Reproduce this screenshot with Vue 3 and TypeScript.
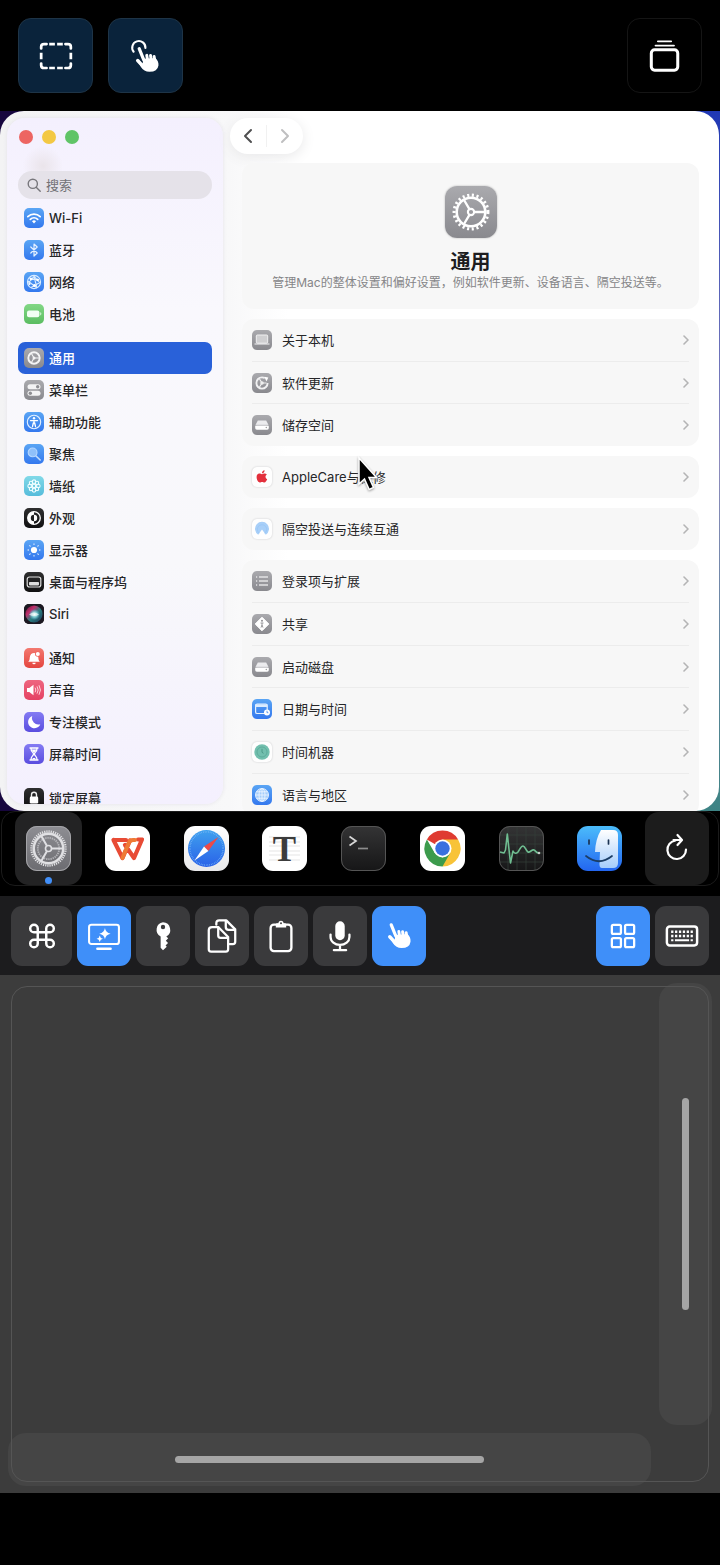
<script setup lang="ts">
import { ref } from 'vue'

interface Item {
  id: string
  label: string
  tone: string
}

const sidebar: Item[][] = [
  [
    { id: 'wifi', label: 'Wi-Fi', tone: 'blue' },
    { id: 'bluetooth', label: '蓝牙', tone: 'blue' },
    { id: 'network', label: '网络', tone: 'blue' },
    { id: 'battery', label: '电池', tone: 'green' },
  ],
  [
    { id: 'gear', label: '通用', tone: 'gray' },
    { id: 'menubar', label: '菜单栏', tone: 'gray' },
    { id: 'access', label: '辅助功能', tone: 'blue' },
    { id: 'spotlight', label: '聚焦', tone: 'blue' },
    { id: 'wallpaper', label: '墙纸', tone: 'cyan' },
    { id: 'appearance', label: '外观', tone: 'black' },
    { id: 'display', label: '显示器', tone: 'blue' },
    { id: 'desktop', label: '桌面与程序坞', tone: 'black' },
    { id: 'siri', label: 'Siri', tone: 'black' },
  ],
  [
    { id: 'bell', label: '通知', tone: 'red' },
    { id: 'sound', label: '声音', tone: 'pink' },
    { id: 'moon', label: '专注模式', tone: 'indigo' },
    { id: 'hourglass', label: '屏幕时间', tone: 'indigo' },
  ],
  [{ id: 'lock', label: '锁定屏幕', tone: 'black' }],
]

const groups: { size: string; items: Item[] }[] = [
  {
    size: 'three',
    items: [
      { id: 'laptop', label: '关于本机', tone: 'gray' },
      { id: 'update', label: '软件更新', tone: 'gray' },
      { id: 'disk', label: '储存空间', tone: 'gray' },
    ],
  },
  { size: 'one', items: [{ id: 'apple', label: 'AppleCare与保修', tone: 'white' }] },
  { size: 'one', items: [{ id: 'airdrop', label: '隔空投送与连续互通', tone: 'white' }] },
  {
    size: 'six',
    items: [
      { id: 'list', label: '登录项与扩展', tone: 'gray' },
      { id: 'share', label: '共享', tone: 'gray' },
      { id: 'disk', label: '启动磁盘', tone: 'gray' },
      { id: 'calendar', label: '日期与时间', tone: 'blue' },
      { id: 'timemachine', label: '时间机器', tone: 'white' },
      { id: 'globe', label: '语言与地区', tone: 'blue' },
    ],
  },
]

const dock = [
  { id: 'settings', label: '系统设置' },
  { id: 'wps', label: 'WPS Office' },
  { id: 'safari', label: 'Safari' },
  { id: 'typora', label: 'Typora' },
  { id: 'terminal', label: '终端' },
  { id: 'chrome', label: 'Chrome' },
  { id: 'activity', label: '活动监视器' },
  { id: 'finder', label: '访达' },
]

const tools = [
  { id: 'command', label: 'Command', on: false },
  { id: 'screen', label: '屏幕', on: true },
  { id: 'key', label: '密码', on: false },
  { id: 'copy', label: '拷贝', on: false },
  { id: 'paste', label: '粘贴', on: false },
  { id: 'mic', label: '麦克风', on: false },
  { id: 'hand', label: '触控', on: true },
]
const rightTools = [
  { id: 'grid', label: '面板', on: true },
  { id: 'keyboard', label: '键盘', on: false },
]

const active = ref('gear')
const activeApp = ref('settings')
const query = ref('')
</script>

<template>
  <div class="app" lang="zh-CN">
    <svg class="sprite" aria-hidden="true">
      <defs>
        <linearGradient id="g-safari" x1="0" y1="0" x2="0" y2="1">
          <stop offset="0" stop-color="#3fa0ee" /><stop offset="1" stop-color="#2a62e8" />
        </linearGradient>
        <linearGradient id="g-finder" x1="0" y1="0" x2="0" y2="1">
          <stop offset="0" stop-color="#4bbcfb" /><stop offset="1" stop-color="#2366f0" />
        </linearGradient>
        <linearGradient id="g-face" x1="0" y1="0" x2="0" y2="1">
          <stop offset="0" stop-color="#ffffff" /><stop offset="1" stop-color="#a5cdfb" />
        </linearGradient>
        <linearGradient id="g-gray" x1="0" y1="0" x2="0" y2="1">
          <stop offset="0" stop-color="#8e8e93" /><stop offset="1" stop-color="#6c6c71" />
        </linearGradient>
        <linearGradient id="g-dark" x1="0" y1="0" x2="0" y2="1">
          <stop offset="0" stop-color="#343435" /><stop offset="1" stop-color="#161617" />
        </linearGradient>
        <linearGradient id="g-light" x1="0" y1="0" x2="0" y2="1">
          <stop offset="0" stop-color="#ffffff" /><stop offset="1" stop-color="#e9e9eb" />
        </linearGradient>
        <radialGradient id="g-siri" cx="0.5" cy="0.5" r="0.5">
          <stop offset="0" stop-color="#f4ffff" /><stop offset="0.5" stop-color="#8edbe0" stop-opacity="0.8" /><stop offset="1" stop-color="#5fb8e0" stop-opacity="0" />
        </radialGradient>
        <linearGradient id="g-siribg" x1="0" y1="0" x2="1" y2="1">
          <stop offset="0" stop-color="#4a1530" /><stop offset="0.3" stop-color="#c22d6c" /><stop offset="0.55" stop-color="#2a7f80" /><stop offset="1" stop-color="#1c3458" />
        </linearGradient>

        <symbol id="s-wifi" viewBox="0 0 20 20">
          <g fill="none" stroke="#fff" stroke-width="1.7" stroke-linecap="round">
            <path d="M3.8 8.6a9 9 0 0 1 12.4 0" /><path d="M6.3 11.3a5.4 5.4 0 0 1 7.4 0" />
          </g>
          <path d="M8 13.2a2.9 2.9 0 0 1 4 0L10 15.4z" fill="#fff" />
        </symbol>
        <symbol id="s-bluetooth" viewBox="0 0 20 20">
          <path d="M6.8 7l6.4 6L10 16V4l3.2 3-6.4 6" fill="none" stroke="#e4f0ff" stroke-width="1.2" stroke-linejoin="round" stroke-linecap="round" />
        </symbol>
        <symbol id="s-network" viewBox="0 0 20 20">
          <g fill="none" stroke="#d8ebff" stroke-width="1.1">
            <circle cx="10" cy="10" r="6.6" /><path d="M5 6l10 1.5M4 11.5l6-7 3 11.5M7 15.5l9-5M4 9l9 7M10 4l6 7" />
          </g>
          <g fill="#fff"><circle cx="7" cy="7" r="1.3" /><circle cx="13.5" cy="8" r="1.3" /><circle cx="10.5" cy="13.5" r="1.4" /><circle cx="5.5" cy="12" r="1" /></g>
        </symbol>
        <symbol id="s-battery" viewBox="0 0 20 20">
          <rect x="3" y="6.6" width="12.4" height="6.6" rx="2" fill="#f2fff3" /><path d="M16.2 8.3c1.6.4 1.6 2.8 0 3.2z" fill="#d8f7dc" />
        </symbol>
        <symbol id="s-gear" viewBox="0 0 20 20">
          <g fill="none" stroke="#fff">
            <circle cx="10" cy="10" r="6.5" stroke-width="1.2" pathLength="44" stroke-dasharray="0.9 1.1" />
            <circle cx="10" cy="10" r="5.5" stroke-width="1" />
            <circle cx="10" cy="10" r="1.2" stroke-width="0.8" />
            <path d="M11.3 10h4.100M9.400 8.900L7.200 5.200M9.400 11.100l-2.200 3.700" stroke-width="0.900" />
          </g>
        </symbol>
        <symbol id="s-gear-small" viewBox="0 0 20 20">
          <g fill="none" stroke="#f4f4f5">
            <circle cx="10" cy="10" r="5.700" stroke-width="1.900" /><circle cx="10" cy="10" r="1.500" fill="#f4f4f5" stroke="none" />
            <path d="M10 10h5.500M10 10L7.300 5.300M10 10l-2.700 4.700" stroke-width="1.100" />
          </g>
        </symbol>
        <symbol id="s-menubar" viewBox="0 0 20 20">
          <rect x="3.500" y="4.300" width="13" height="5" rx="2.500" fill="#f3f3f4" /><rect x="3.500" y="10.800" width="13" height="5" rx="2.500" fill="#f3f3f4" />
          <circle cx="13.700" cy="6.800" r="1.700" fill="#8e8e92" /><circle cx="6.300" cy="13.300" r="1.700" fill="#8e8e92" />
        </symbol>
        <symbol id="s-access" viewBox="0 0 20 20">
          <circle cx="10" cy="10" r="6.700" fill="none" stroke="#e2f0ff" stroke-width="1.100" />
          <circle cx="10" cy="6.300" r="1.200" fill="#fff" />
          <path d="M6.500 8.600h7M10 8.600v3M9.300 11l-.8 3.500M10.700 11l.8 3.500" stroke="#fff" stroke-width="1.300" fill="none" stroke-linecap="round" />
        </symbol>
        <symbol id="s-spotlight" viewBox="0 0 20 20">
          <circle cx="8.600" cy="8.400" r="4.400" fill="#8fc0fa" stroke="#b5d7ff" stroke-width="1.100" /><path d="M12 12l4.200 4" stroke="#c4defd" stroke-width="1.600" stroke-linecap="round" />
        </symbol>
        <symbol id="s-wallpaper" viewBox="0 0 20 20">
          <g fill="none" stroke="#f0feff" stroke-width="1.100">
            <circle cx="10" cy="10" r="1.700" /><circle cx="10" cy="5.700" r="1.800" /><circle cx="10" cy="14.300" r="1.800" /><circle cx="5.700" cy="10" r="1.800" /><circle cx="14.300" cy="10" r="1.800" />
            <circle cx="7" cy="7" r="1.700" /><circle cx="13" cy="7" r="1.700" /><circle cx="7" cy="13" r="1.700" /><circle cx="13" cy="13" r="1.700" />
          </g>
        </symbol>
        <symbol id="s-appearance" viewBox="0 0 20 20">
          <circle cx="10" cy="10" r="6.300" fill="none" stroke="#fff" stroke-width="1.300" /><path d="M10 3.700a6.300 6.300 0 0 0 0 12.600v-3.100a3.200 3.200 0 0 1 0-6.400z" fill="#fff" /><path d="M10 6.800a3.200 3.200 0 0 1 0 6.400z" fill="#fff" />
        </symbol>
        <symbol id="s-display" viewBox="0 0 20 20">
          <circle cx="10" cy="10" r="3.100" fill="#fff" /><circle cx="10" cy="10" r="5.700" fill="none" stroke="#fff" stroke-width="1.500" pathLength="80" stroke-dasharray="2.200 7.800" stroke-dashoffset="1.100" />
        </symbol>
        <symbol id="s-desktop" viewBox="0 0 20 20">
          <rect x="3.200" y="5" width="13.600" height="10" rx="2.200" fill="none" stroke="#ddd" stroke-width="1.200" /><rect x="5" y="10" width="10" height="3.400" rx="0.800" fill="#ddd" />
        </symbol>
        <symbol id="s-siri" viewBox="0 0 20 20">
          <rect x="0" y="0" width="20" height="20" fill="#1c1822" /><circle cx="10" cy="10" r="8.600" fill="url(#g-siribg)" /><circle cx="10.500" cy="10.500" r="5.600" fill="url(#g-siri)" />
          <path d="M5 10.500q5-4 10 0q-5 3-10 0z" fill="#fff" opacity="0.600" />
        </symbol>
        <symbol id="s-bell" viewBox="0 0 20 20">
          <path d="M4.200 13.800c1.600-1.500 1.300-2.300 1.600-4.600.3-2.600 2-4.200 4.200-4.200s4 1.600 4.300 4.200c.3 2.300.1 3.100 1.500 4.600zM8.300 14.800h3.400a1.700 1.500 0 0 1-3.400 0z" fill="#fff" /><circle cx="13.800" cy="6" r="2.800" fill="#f0675e" /><circle cx="13.800" cy="6" r="2" fill="#fff" />
        </symbol>
        <symbol id="s-sound" viewBox="0 0 20 20">
          <path d="M3 8h2.300L9.500 4.800v10.400L5.300 12H3z" fill="#fff" /><path d="M11.300 8q1.300 2 0 4M13.200 6.700q2.100 3.300 0 6.600M15.200 5.600q2.700 4.400 0 8.800" fill="none" stroke="#ffd4dc" stroke-width="1" stroke-linecap="round" />
        </symbol>
        <symbol id="s-moon" viewBox="0 0 20 20"><path d="M8.300 4a6.300 6.300 0 1 0 8 8.200A6.400 6.400 0 0 1 8.300 4z" fill="#fff" /></symbol>
        <symbol id="s-hourglass" viewBox="0 0 20 20">
          <path d="M6 4h8M6 16h8M7 4.500c0 3.500 2.500 3.500 2.500 5.500S7 12 7 15.500M13 4.500c0 3.500-2.500 3.500-2.500 5.500s2.500 2 2.500 5.500" fill="none" stroke="#fff" stroke-width="1.300" stroke-linecap="round" /><path d="M7.500 5.500h5L10 9zM8 15.500c.3-2 3.700-2 4 0z" fill="#fff" />
        </symbol>
        <symbol id="s-lock" viewBox="0 0 20 20"><path d="M7.500 9V6.800a2.500 2.500 0 0 1 5 0V9" fill="none" stroke="#eee" stroke-width="1.400" /><rect x="5.800" y="8.600" width="8.400" height="7" rx="1.300" fill="#fff" /></symbol>
        <symbol id="s-laptop" viewBox="0 0 20 20">
          <rect x="4.300" y="5" width="11.400" height="8.200" rx="1" fill="#cfcfd1" stroke="#efeff0" stroke-width="1" /><path d="M2.500 13.500h15v1h-15z" fill="#f4f4f5" />
        </symbol>
        <symbol id="s-update" viewBox="0 0 20 20">
          <circle cx="10" cy="10" r="5.600" fill="none" stroke="#f1f1f2" stroke-width="1.900" pathLength="60" stroke-dasharray="50 10" />
          <path d="M10 10h4.500M10 10L7.500 6M10 10l-2.500 4" stroke="#eee" stroke-width="1.200" /><circle cx="10" cy="10" r="1.800" fill="#eee" /><path d="M12.300 3.700l4 .8-1.800 4z" fill="#fff" />
        </symbol>
        <symbol id="s-disk" viewBox="0 0 20 20">
          <path d="M5.800 5.400h8.400l2.300 4.500H3.500z" fill="#ececee" /><rect x="3.200" y="10" width="13.600" height="4.700" rx="1.600" fill="#fff" /><path d="M3.800 10.300h12.400" stroke="#a6a6aa" stroke-width="0.700" /><circle cx="14.300" cy="12.500" r="0.700" fill="#999" />
        </symbol>
        <symbol id="s-apple" viewBox="0 0 20 20">
          <path d="M10 7.200c-.9 0-1.600-.6-2.600-.6C5.700 6.600 4.600 8 4.600 10c0 2.700 1.700 5.400 3.200 5.400.8 0 1.300-.5 2.300-.5s1.400.5 2.200.5c1.300 0 2.400-1.800 2.900-3.200-2.200-1-2.100-3.700-.3-4.600-.6-.7-1.400-1-2.200-1-1.100 0-1.800.6-2.700.6z" fill="#e3303c" /><path d="M9.900 6.400c0-1.700 1.100-2.900 2.700-3.100 0 1.700-1.100 3-2.700 3.100z" fill="#e3303c" />
        </symbol>
        <symbol id="s-airdrop" viewBox="0 0 20 20">
          <path d="M6.200 15.700a7 7 0 1 1 7.600 0L10 10.500z" fill="#a8cff8" /><path d="M7.200 14.200a4.700 4.700 0 1 1 5.600 0" fill="none" stroke="#97c5f6" stroke-width="0.700" />
        </symbol>
        <symbol id="s-list" viewBox="0 0 20 20"><path d="M7 6h9M7 10h9M7 14h9M4 6h1.200M4 10h1.200M4 14h1.200" stroke="#e2e2e4" stroke-width="1.300" /></symbol>
        <symbol id="s-share" viewBox="0 0 20 20">
          <path d="M10 3.200L16.800 10 10 16.800 3.200 10z" fill="#fff" stroke="#fff" stroke-width="1" stroke-linejoin="round" /><circle cx="10" cy="6.800" r="1" fill="#8f8f93" /><path d="M8.500 9h3M10 9v2.200M10 11l-1 2.600M10 11l1 2.600" stroke="#8f8f93" stroke-width="0.900" />
        </symbol>
        <symbol id="s-calendar" viewBox="0 0 20 20">
          <rect x="3.600" y="5" width="11.600" height="9.500" rx="1.600" fill="none" stroke="#e6f2ff" stroke-width="1.200" /><path d="M3.400 5.200h12v2.800h-12z" fill="#dbecff" /><circle cx="15" cy="13.500" r="3" fill="#fff" /><path d="M15 11.800v1.900h1.300" fill="none" stroke="#3d86ee" stroke-width="0.800" />
        </symbol>
        <symbol id="s-timemachine" viewBox="0 0 20 20">
          <circle cx="10" cy="10" r="7.700" fill="#72bfae" /><circle cx="10" cy="10" r="5" fill="none" stroke="#5dac9a" stroke-width="1" /><path d="M10 6.800v3.500l1.500 1" fill="none" stroke="#4c9a88" stroke-width="1" />
        </symbol>
        <symbol id="s-globe" viewBox="0 0 20 20">
          <circle cx="10" cy="10" r="6.500" fill="#a4cdfb" /><g fill="none" stroke="#eaf4ff" stroke-width="0.900"><circle cx="10" cy="10" r="6.500" /><ellipse cx="10" cy="10" rx="3" ry="6.500" /><path d="M3.500 10h13M4.500 6.800h11M4.500 13.200h11M10 3.500v13" /></g>
        </symbol>

        <symbol id="d-settings" viewBox="0 0 45 45">
          <rect width="45" height="45" rx="11" fill="url(#g-gray)" /><rect x="0.500" y="0.500" width="44" height="44" rx="10.500" fill="none" stroke="#a4a4a8" />
          <g fill="none" stroke="#e0e0e3">
            <circle cx="22.500" cy="22.500" r="17" stroke-width="2.400" pathLength="96" stroke-dasharray="1.100 0.900" />
            <circle cx="22.500" cy="22.500" r="14.700" stroke-width="2.400" />
            <circle cx="22.500" cy="22.500" r="10.700" stroke-width="1.800" stroke="#b5b5b9" pathLength="60" stroke-dasharray="1.200 0.800" />
            <circle cx="22.500" cy="22.500" r="3" stroke-width="1.600" />
            <path d="M25.500 22.500h12M21 20L15 9.500M21 25l-6 10.500" stroke-width="2" />
          </g>
        </symbol>
        <symbol id="d-wps" viewBox="0 0 45 45">
          <rect width="45" height="45" rx="11" fill="#fff" />
          <path d="M8.500 14h12.500M8.500 14l9 18 7.500-17.500M20 19l9 13 8-18.500h-4" fill="none" stroke="#e84b35" stroke-width="4.200" stroke-linejoin="round" stroke-linecap="round" />
          <path d="M17.500 32l6.200-15q1.200-3 4.300-3h2" fill="none" stroke="#ef7a35" stroke-width="4" stroke-linecap="round" />
        </symbol>
        <symbol id="d-safari" viewBox="0 0 45 45">
          <rect width="45" height="45" rx="11" fill="url(#g-light)" /><circle cx="22.500" cy="22.500" r="18.500" fill="url(#g-safari)" />
          <circle cx="22.500" cy="22.500" r="16.600" fill="none" stroke="#7fbcf8" stroke-width="1.400" pathLength="120" stroke-dasharray="0.700 1.300" />
          <path d="M34.500 11L24.400 25 20 20.500z" fill="#ee4a48" /><path d="M10.500 34.500L20 20.500l4.400 4.500z" fill="#fff" />
        </symbol>
        <symbol id="d-typora" viewBox="0 0 45 45">
          <rect width="45" height="45" rx="11" fill="#fff" /><path d="M7 11h31M7 16h31M7 20h31M7 25h31M7 29h31M7 34h31" stroke="#e5e5e5" />
          <text x="22.500" y="35" text-anchor="middle" class="serif-glyph">T</text>
        </symbol>
        <symbol id="d-terminal" viewBox="0 0 45 45">
          <rect width="45" height="45" rx="11" fill="url(#g-dark)" /><rect x="0.500" y="0.500" width="44" height="44" rx="10.500" fill="none" stroke="#555" />
          <path d="M8.500 10.500l6.500 4.500-6.500 4.500" fill="none" stroke="#d8d8d8" stroke-width="1.700" /><path d="M17 22.500h10" stroke="#8c8c8c" stroke-width="1.700" />
        </symbol>
        <symbol id="d-chrome" viewBox="0 0 45 45">
          <rect width="45" height="45" rx="11" fill="#fff" />
          <path d="M22.500 22.500L6.900 13.500a18 18 0 0 1 31.200 0z" fill="#df3b31" /><path d="M22.500 13.500h15.600a18 18 0 0 1-15.600 27z" fill="#f8c338" /><path d="M6.900 13.500l7.800 13.500 7.800 4.500 7.700-4.500-7.700 13.500A18 18 0 0 1 6.900 13.500z" fill="#3c9b4c" />
          <circle cx="22.500" cy="22.500" r="9" fill="#fff" /><circle cx="22.500" cy="22.500" r="7.200" fill="#3970df" />
        </symbol>
        <symbol id="d-activity" viewBox="0 0 45 45">
          <rect width="45" height="45" rx="11" fill="url(#g-dark)" /><path d="M9 1v43M18 1v43M27 1v43M36 1v43M1 9h43M1 18h43M1 27h43M1 36h43" stroke="#334139" stroke-width="0.700" /><rect x="0.500" y="0.500" width="44" height="44" rx="10.500" fill="none" stroke="#555" />
          <path d="M1 26l4 1 1.500-3L8.300 8l3.200 29 2.500-12q2 4 5 1c2-3 3-6 5-6s3 5 5 6 4-3 6-2 2 3 5 3" fill="none" stroke="#6fbd91" stroke-width="1.600" stroke-linejoin="round" /><circle cx="40" cy="27" r="1.300" fill="#c4cbc7" />
        </symbol>
        <symbol id="d-finder" viewBox="0 0 45 45">
          <rect width="45" height="45" rx="11" fill="url(#g-finder)" /><path d="M24 4h12q5 0 5 5v28q0 5-5 5H25q-3 0-2.500-5l.500-11h-5q.500-13 6-22z" fill="url(#g-face)" />
          <path d="M12 14v4M31.500 14v4" stroke="#1b3353" stroke-width="1.700" stroke-linecap="round" /><path d="M9 30q13 10.500 26 0" fill="none" stroke="#1b3d65" stroke-width="1.700" stroke-linecap="round" />
        </symbol>

        <symbol id="t-command" viewBox="0 0 36 36"><path d="M14 14H9.500a4 4 0 1 1 4-4v16a4 4 0 1 1-4-4h17a4 4 0 1 1-4 4V10a4 4 0 1 1 4 4z" fill="none" stroke="#fff" stroke-width="2.600" /></symbol>
        <symbol id="t-screen" viewBox="0 0 36 36">
          <rect x="2.200" y="6" width="31.600" height="20.500" rx="2.500" fill="none" stroke="#fff" stroke-width="2.200" /><path d="M11 31.500h14" stroke="#fff" stroke-width="2.600" stroke-linecap="round" />
          <path d="M19 9.500q.8 5.200 6 6-5.200.8-6 6-.8-5.200-6-6 5.200-.8 6-6zM13.500 17.500q.4 3 3.400 3.400-3 .4-3.400 3.400-.4-3-3.400-3.400 3-.4 3.400-3.400z" fill="#fff" />
        </symbol>
        <symbol id="t-key" viewBox="0 0 36 36"><path fill-rule="evenodd" d="M18 3.500a8 8 0 0 1 3.500 15l2 2-2.500 2.500 2.300 2.500-2.600 2.500 1.300 1.500-4 3.500-2.500-2.500V18.500A8 8 0 0 1 18 3.500zM18 6.200a2.300 2.300 0 1 0 0 4.600 2.300 2.300 0 0 0 0-4.600z" fill="#fff" /></symbol>
        <symbol id="t-copy" viewBox="0 0 36 36">
          <g fill="none" stroke="#fff" stroke-width="2.400" stroke-linejoin="round" stroke-linecap="round">
            <path d="M12 6V4.500Q12 1.500 15 1.500h7.500L32 11v13q0 2.500-2.500 2.500H26" /><path d="M22 2v6.500q0 3 3 3h6.500" />
            <path d="M7.500 8.500h6.500l10.500 10.500V32q0 2.500-2.500 2.500H6.500Q4 34.500 4 32V12q0-3.500 3.500-3.500z" /><path d="M14 9v8.500q0 2.500 2.500 2.500h7.500" />
          </g>
        </symbol>
        <symbol id="t-paste" viewBox="0 0 36 36"><rect x="7" y="6" width="22" height="28" rx="3.500" fill="none" stroke="#fff" stroke-width="2.500" /><path d="M12.500 9V6q0-1.500 1.500-1.500h1.300a2.700 2.700 0 0 1 5.400 0H22q1.500 0 1.500 1.500v3z" fill="#fff" /><circle cx="18" cy="4.500" r="1" fill="#3a3a3c" /></symbol>
        <symbol id="t-mic" viewBox="0 0 36 36"><rect x="13" y="2.500" width="10" height="20" rx="5" fill="#fff" /><path d="M8 16.500v2.500a10 8.500 0 0 0 20 0v-2.500M18 28v4.500M11.500 33h13" fill="none" stroke="#fff" stroke-width="2.400" stroke-linecap="round" /></symbol>
        <g id="hand-shape">
          <g fill="none" stroke="#fff" stroke-linecap="round">
            <path d="M9.800 6.200L14.600 18" stroke-width="3.400" /><path d="M17.800 13.300l1.200 7M21.800 13.500l1 7M25.600 14.600l1 6" stroke-width="3.100" /><path d="M8.200 18.800L14 25" stroke-width="3.600" />
          </g>
          <path d="M14 17l13-1q3.600 3.500 3.200 8-1 6.700-9.500 6.700-6 0-9-5l-2.500-4.200 4.300.500z" fill="#fff" />
        </g>
        <symbol id="t-hand" viewBox="0 0 36 36"><use href="#hand-shape" /></symbol>
        <symbol id="t-grid" viewBox="0 0 36 36"><g fill="none" stroke="#fff" stroke-width="2.400"><rect x="6.200" y="6.200" width="9.600" height="9.600" rx="1.500" /><rect x="20.200" y="6.200" width="9.600" height="9.600" rx="1.500" /><rect x="6.200" y="20.200" width="9.600" height="9.600" rx="1.500" /><rect x="20.200" y="20.200" width="9.600" height="9.600" rx="1.500" /></g></symbol>
        <symbol id="t-keyboard" viewBox="0 0 36 36"><rect x="2" y="8" width="32" height="20" rx="3" fill="none" stroke="#fff" stroke-width="2.600" /><path d="M6.500 13.500h23M6.500 18h23" stroke="#fff" stroke-width="2.400" stroke-dasharray="2.400 1.720" /><path d="M6.500 22.500h2.400M10.500 22.500h15M27.100 22.500h2.400" stroke="#fff" stroke-width="2.200" /></symbol>
        <symbol id="t-refresh" viewBox="0 0 36 36"><path d="M16.500 9.500A9.300 9.300 0 1 0 27 18.500M14.500 9h8M18.500 4l4.500 5-4.500 5" fill="none" stroke="#fff" stroke-width="2.200" stroke-linecap="round" stroke-linejoin="round" /></symbol>
        <symbol id="t-select" viewBox="0 0 36 36">
          <g fill="none" stroke="#fff" stroke-width="2.900"><path d="M2.300 10V8.300Q2.300 5.300 5.300 5.300H8M28 5.300h2.700q3 0 3 3V10M33.700 26v1.700q0 3-3 3H28M8 30.700H5.300q-3 0-3-3V26" stroke-linecap="round" /><path d="M10.800 5.300h6M19.200 5.300h6M10.800 30.700h6M19.200 30.700h6M2.300 14.500v7M33.700 14.500v7" /></g>
        </symbol>
        <symbol id="t-tap" viewBox="0 0 36 36">
          <path d="M4.900 13.500A7 7 0 1 1 17.400 9.500" fill="none" stroke="#fff" stroke-width="2.200" stroke-linecap="round" />
          <use href="#hand-shape" x="1" y="4" />
        </symbol>
        <symbol id="t-stack" viewBox="0 0 36 36"><path d="M10.500 2.500h14M8 7h19.500" stroke="#fff" stroke-width="2" stroke-linecap="round" /><rect x="3.500" y="11.500" width="28" height="21.500" rx="3.500" fill="none" stroke="#fff" stroke-width="3.200" /></symbol>
      </defs>
    </svg>

    <header class="topbar">
      <button class="square tinted" aria-label="框选"><svg class="glyph"><use href="#t-select" /></svg></button>
      <button class="square tinted" aria-label="点按"><svg class="glyph"><use href="#t-tap" /></svg></button>
      <button class="square plain" aria-label="窗口"><svg class="glyph"><use href="#t-stack" /></svg></button>
    </header>

    <section class="desktop">
      <div class="window">
        <aside class="sidebar">
          <div class="lights">
            <button class="light close" aria-label="关闭"></button>
            <button class="light mini" aria-label="最小化"></button>
            <button class="light zoom" aria-label="缩放"></button>
          </div>
          <label class="search">
            <svg viewBox="0 0 14 14"><circle cx="5.800" cy="5.800" r="4.600" /><path d="M9.200 9.200l4 4" /></svg>
            <input v-model="query" type="text" placeholder="搜索" aria-label="搜索" />
          </label>
          <nav class="nav">
            <ul v-for="(group, g) in sidebar" :key="g">
              <li v-for="item in group" :key="item.id">
                <button class="nav-row" :class="{ selected: active === item.id }" @click="active = item.id">
                  <span class="tile" :class="item.tone"><svg><use :href="item.id === 'gear' ? '#s-gear-small' : '#s-' + item.id" /></svg></span>
                  {{ item.label }}
                </button>
              </li>
            </ul>
          </nav>
        </aside>

        <main class="main">
          <div class="history">
            <button aria-label="后退"><svg viewBox="0 0 10 16"><path d="M8 2L2 8l6 6" /></svg></button>
            <button class="dim" aria-label="前进"><svg viewBox="0 0 10 16"><path d="M2 2l6 6-6 6" /></svg></button>
          </div>
          <section class="hero">
            <span class="tile big gray"><svg><use href="#s-gear" /></svg></span>
            <h1>通用</h1>
            <p>管理Mac的整体设置和偏好设置，例如软件更新、设备语言、隔空投送等。</p>
          </section>
          <ul v-for="(group, g) in groups" :key="g" class="card" :class="group.size">
            <li v-for="item in group.items" :key="item.label">
              <button class="card-row">
                <span class="tile" :class="item.tone"><svg><use :href="'#s-' + item.id" /></svg></span>
                <span class="card-label">{{ item.label }}</span>
                <svg class="chevron" viewBox="0 0 6 10"><path d="M1 1l4 4-4 4" /></svg>
              </button>
            </li>
          </ul>
        </main>
      </div>
      <svg class="pointer" viewBox="0 0 20 36" aria-hidden="true"><path d="M2 2v26l5.500-5 4.700 10.500 4.300-2-4.500-10h7.500z" /></svg>
    </section>

    <nav class="dock">
      <button v-for="app in dock" :key="app.id" class="dock-item" :class="{ current: activeApp === app.id }" :aria-label="app.label" @click="activeApp = app.id">
        <svg><use :href="'#d-' + app.id" /></svg>
      </button>
      <button class="dock-item refresh" aria-label="刷新"><svg><use href="#t-refresh" /></svg></button>
    </nav>

    <div class="toolbar">
      <button v-for="tool in tools" :key="tool.id" class="tool" :class="[tool.id, { on: tool.on }]" :aria-label="tool.label"><svg><use :href="'#t-' + tool.id" /></svg></button>
      <span class="spacer"></span>
      <button v-for="tool in rightTools" :key="tool.id" class="tool" :class="[tool.id, { on: tool.on }]" :aria-label="tool.label"><svg><use :href="'#t-' + tool.id" /></svg></button>
    </div>

    <section class="pad" aria-label="触控板">
      <div class="strip vertical"><span></span></div>
      <div class="strip horizontal"><span></span></div>
      <div class="outline"></div>
    </section>
  </div>
</template>

<style>
body {
  background: #000;
}
</style>

<style scoped>
.app {
  display: flex;
  flex-direction: column;
  min-height: 100vh;
  box-sizing: border-box;
  padding-bottom: 72px;
  background: #000;
  color: #262628;
  font-family: Inter, "Noto Sans CJK SC", sans-serif;
  font-size: 13px;
  line-height: 20px;
}
.app * {
  box-sizing: border-box;
}
.sprite {
  position: absolute;
  width: 0;
  height: 0;
}
button {
  border: 0;
  padding: 0;
  margin: 0;
  background: none;
  color: inherit;
  font: inherit;
  cursor: pointer;
}
svg {
  display: block;
}
ul {
  list-style: none;
  margin: 0;
  padding: 0;
}
.serif-glyph {
  font: bold 35px "Liberation Serif", serif;
  fill: #3c3c3c;
}

.topbar {
  display: flex;
  gap: 15px;
  padding: 18px;
}
.square {
  display: grid;
  place-items: center;
  width: 75px;
  height: 75px;
  border: 1px solid #1e3447;
  border-radius: 13px;
}
.square.tinted {
  background: #0a233b;
}
.square.plain {
  margin-left: auto;
  border-color: #151515;
}
.glyph {
  width: 34px;
  height: 34px;
}

.desktop {
  position: relative;
  flex: none;
  min-height: 0;
  aspect-ratio: 36 / 35;
  background: linear-gradient(to right, #17063e 50%, transparent 50%), linear-gradient(#2038b4, #8d8bbd 50%, #3d8384);
}
.window {
  display: flex;
  height: 100%;
  margin-right: 1px;
  padding: 7px 0 7px 7px;
  border-radius: 24px;
  background: linear-gradient(90deg, #f3f3f4, #f8f8f9 32%, #fff 40%);
  overflow: hidden;
}
.sidebar {
  flex: none;
  width: 216px;
  padding: 12px 11px 0;
  border-radius: 18px;
  background: radial-gradient(circle at 36px 48px, #eae4ea, transparent 20px), linear-gradient(#f4f0fe, #f9f8fd 28%, #f8f8fb 65%, #f4f0fe);
  box-shadow: 0 0 4px #e4e2e9;
  overflow: hidden;
}
.lights {
  display: flex;
  gap: 9px;
  padding-left: 1px;
}
.light {
  width: 14px;
  height: 14px;
  border-radius: 50%;
}
.close {
  background: #ed6562;
}
.mini {
  background: #f3c843;
}
.zoom {
  background: #60c467;
}
.search {
  display: flex;
  align-items: center;
  gap: 5px;
  height: 28px;
  margin: 27px 0 3px;
  padding: 0 9px;
  border-radius: 14px;
  background: #e5e2e9;
}
.search svg {
  width: 14px;
  height: 14px;
  fill: none;
  stroke: #78777c;
  stroke-width: 1.4;
  stroke-linecap: round;
}
.search input {
  flex: 1;
  min-width: 0;
  padding: 0;
  border: 0;
  outline: 0;
  background: none;
  font: inherit;
  color: #333;
}
.search input::placeholder {
  color: #727176;
  opacity: 1;
}
.nav ul + ul {
  margin-top: 12px;
}
.nav-row {
  display: flex;
  align-items: center;
  gap: 5px;
  width: 100%;
  height: 32px;
  padding: 0 6px;
  border-radius: 7px;
  font-weight: 500;
  white-space: nowrap;
}
.nav-row.selected {
  background: #2961d9;
  color: #fff;
}
.tile {
  flex: none;
  width: 20px;
  height: 20px;
  border-radius: 5px;
  overflow: hidden;
}
.tile svg {
  width: 100%;
  height: 100%;
}
.blue {
  background: linear-gradient(#5aa5f4, #3478ee);
}
.green {
  background: linear-gradient(#82d786, #5bbd61);
}
.gray {
  background: linear-gradient(#aaaaae, #89898e);
}
.cyan {
  background: linear-gradient(#81d9e8, #56bcdb);
}
.black {
  background: linear-gradient(#2e2e2f, #101011);
}
.red {
  background: linear-gradient(#f37970, #e4453f);
}
.pink {
  background: linear-gradient(#ee6680, #e54263);
}
.indigo {
  background: linear-gradient(#847bf3, #5a4ddf);
}
.white {
  background: #fefefe;
  box-shadow: 0 0 2px #c6c6c8;
}

.main {
  flex: 1;
  min-width: 0;
  padding: 0 20px 0 7px;
}
.history {
  display: flex;
  align-items: center;
  width: 73px;
  height: 36px;
  margin-bottom: 9px;
  border-radius: 18px;
  background: #fff;
  box-shadow: 0 3px 14px #e8e8e9;
}
.history button {
  display: grid;
  place-items: center;
  flex: 1;
  height: 22px;
}
.history svg {
  width: 10px;
  height: 16px;
  fill: none;
  stroke: #4f4f50;
  stroke-width: 2;
  stroke-linecap: round;
  stroke-linejoin: round;
}
.history .dim {
  border-left: 1px solid #f1f1f1;
}
.history .dim svg {
  stroke: #bfbfc0;
}
.hero {
  display: flex;
  flex-direction: column;
  align-items: center;
  height: 146px;
  margin: 0 0 10px 12px;
  padding-top: 23px;
  border-radius: 12px;
  background: #f7f7f7;
}
.big {
  width: 52px;
  height: 52px;
  border-radius: 12px;
  box-shadow: 0 0 2px #aaa;
}
h1 {
  margin: 11px 0 0;
  font-size: 20px;
  line-height: 26px;
  font-weight: 700;
  color: #1d1d1f;
}
.hero p {
  margin: 0;
  font-size: 12px;
  line-height: 16px;
  color: #858587;
  white-space: nowrap;
}
.card {
  display: flex;
  flex-direction: column;
  margin: 0 0 10px 12px;
  padding: 0 10px;
  border-radius: 12px;
  background: #f7f7f7;
}
.card.one {
  height: 42px;
}
.card.three {
  height: 127px;
}
.card.six {
  height: 256px;
}
.card li {
  flex: 1;
}
.card li + li {
  border-top: 1px solid #ececec;
}
.card-row {
  display: flex;
  align-items: center;
  width: 100%;
  height: 100%;
  text-align: left;
}
.card-label {
  flex: 1;
  margin-left: 10px;
}
.chevron {
  width: 6px;
  height: 10px;
  fill: none;
  stroke: #b4b4b5;
  stroke-width: 1.6;
  stroke-linecap: round;
  stroke-linejoin: round;
}
.pointer {
  position: absolute;
  left: 357px;
  top: 345px;
  width: 20px;
  height: 36px;
  overflow: visible;
  fill: #000;
  stroke: #fff;
  stroke-width: 1.5;
  filter: drop-shadow(0 1px 1px #999);
}

.dock {
  display: flex;
  justify-content: space-between;
  height: 75px;
  margin: 0 1px 10px;
  padding: 0 9px 0 13px;
  border: 1px solid #1b1b1b;
  border-radius: 14px;
}
.dock-item {
  position: relative;
  display: grid;
  place-items: center;
  width: 67px;
  height: 73px;
  border-radius: 14px;
}
.dock-item svg {
  width: 45px;
  height: 45px;
}
.dock-item.current {
  background: #232324;
}
.dock-item.current::after {
  content: "";
  position: absolute;
  bottom: 1px;
  width: 7px;
  height: 7px;
  border-radius: 50%;
  background: #418ff8;
}
.dock-item.refresh {
  width: 64px;
  background: #1c1c1c;
}
.dock-item.refresh svg {
  width: 36px;
  height: 36px;
}

.toolbar {
  display: flex;
  gap: 5px;
  padding: 10px 11px 9px;
  background: #1c1c1e;
}
.spacer {
  flex: 1;
}
.tool {
  display: grid;
  place-items: center;
  width: 54px;
  height: 60px;
  border-radius: 11px;
  background: #3a3a3c;
}
.tool.command {
  width: 61px;
}
.tool.on {
  background: #3f8ff9;
}
.tool svg {
  width: 34px;
  height: 34px;
}

.pad {
  position: relative;
  display: grid;
  flex: 1;
  min-height: 300px;
  grid-template: 1fr 53px / 1fr 53px;
  gap: 8px;
  padding: 8px 8px 7px;
  background: #3c3c3c;
}
.strip {
  display: grid;
  place-items: center;
  border-radius: 18px;
  background: #454545;
}
.strip span {
  border-radius: 4px;
  background: #a5a5a5;
}
.vertical {
  grid-area: 1 / 2;
}
.vertical span {
  width: 7px;
  height: 48%;
}
.horizontal {
  grid-area: 2 / 1;
}
.horizontal span {
  width: 48%;
  height: 7px;
}
.outline {
  position: absolute;
  inset: 11px;
  border: 1px solid #555;
  border-radius: 16px;
  pointer-events: none;
}
</style>
